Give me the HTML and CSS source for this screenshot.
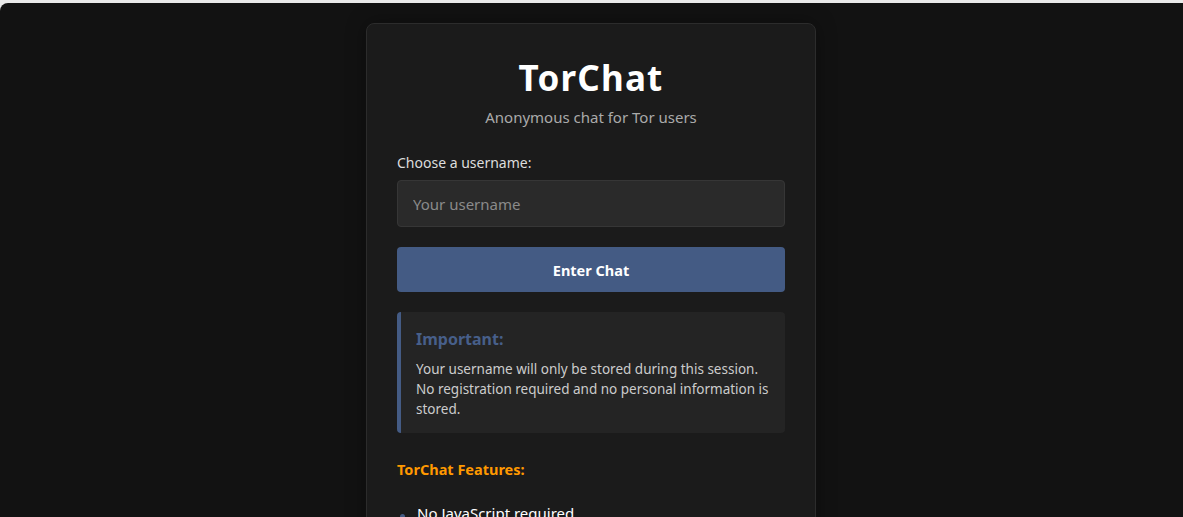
FILE: index.html
```html
<!DOCTYPE html>
<html lang="en">
<head>
<meta charset="utf-8">
<title>TorChat</title>
<link rel="stylesheet" href="styles.css">
</head>
<body>
<div class="page">
  <main class="card">
    <header class="brand">
      <h1 class="brand-title">TorChat</h1>
      <p class="brand-sub">Anonymous chat for Tor users</p>
    </header>
    <form class="login">
      <label class="field-label" for="username">Choose a username:</label>
      <input class="field-input" id="username" type="text" placeholder="Your username">
      <button class="btn" type="submit">Enter Chat</button>
    </form>
    <section class="notice">
      <h3 class="notice-title">Important:</h3>
      <p class="notice-text">Your username will only be stored during this session. No registration required and no personal information is stored.</p>
    </section>
    <section class="features">
      <h4 class="features-title">TorChat Features:</h4>
      <ul class="features-list">
        <li>No JavaScript required</li>
        <li>End-to-end anonymity via Tor</li>
        <li>No logs are kept</li>
      </ul>
    </section>
  </main>
</div>
</body>
</html>
```
FILE: styles.css
```css
html {
  background: #e9e9e9;
  height: 100%;
}
body {
  margin: 3px 0 0;
  min-height: calc(100% - 3px);
  background: #121212;
  border-top-left-radius: 8px;
  font-family: "Noto Sans", "Open Sans", "DejaVu Sans", sans-serif;
  color: #e0e0e0;
}
.page {
  padding: 20px 1px 20px 0;
  display: flex;
  justify-content: center;
}
.card {
  box-sizing: border-box;
  width: 450px;
  background: #1b1b1b;
  border: 1px solid #2c2c2c;
  border-radius: 8px;
  padding: 30px;
  box-shadow: 0 0 20px rgba(0,0,0,0.35);
}
.brand {
  text-align: center;
  margin-bottom: 26px;
}
.brand-title {
  margin: 0;
  font-size: 35px;
  line-height: 48px;
  font-weight: 700;
  color: #ffffff;
  letter-spacing: 1.2px;
}
.brand-sub {
  margin: 5px 0 0;
  font-size: 15px;
  line-height: 20px;
  color: #aaaaaa;
}
.login {
  display: flex;
  flex-direction: column;
}
.field-label {
  font-size: 14px;
  line-height: 20px;
  color: #dddddd;
  margin-bottom: 7px;
}
.field-input {
  box-sizing: border-box;
  height: 47px;
  padding: 0 15px;
  background: #2a2a2a;
  border: 1px solid #363636;
  border-radius: 4px;
  font-family: inherit;
  font-size: 15px;
  color: #e0e0e0;
  outline: none;
}
.field-input::placeholder {
  color: #8a8a8a;
}
.btn {
  margin-top: 20px;
  height: 45px;
  border: none;
  border-radius: 4px;
  background: #445b84;
  color: #ffffff;
  font-family: inherit;
  font-size: 14.5px;
  font-weight: 700;
  cursor: pointer;
}
.notice {
  margin-top: 20px;
  background: #242424;
  border-left: 4px solid #445b84;
  border-radius: 4px;
  padding: 15px 15px 14px 15px;
}
.notice-title {
  margin: 0 0 8px;
  font-size: 16px;
  line-height: 24px;
  font-weight: 700;
  color: #475f8a;
}
.notice-text {
  margin: 0;
  font-size: 13.5px;
  line-height: 20px;
  color: #cccccc;
}
.features {
  margin-top: 26px;
}
.features-title {
  margin: 0;
  font-size: 14.5px;
  line-height: 20px;
  font-weight: 700;
  color: #ff9900;
}
.features-list {
  margin: 22px 0 0;
  padding: 0 0 0 20px;
  list-style: none;
}
.features-list li {
  position: relative;
  font-size: 15px;
  line-height: 24px;
  color: #ffffff;
  margin-bottom: 8px;
}
.features-list li::before {
  content: "";
  position: absolute;
  left: -17px;
  top: 13px;
  width: 5px;
  height: 5px;
  border-radius: 50%;
  background: #445b84;
}
```
